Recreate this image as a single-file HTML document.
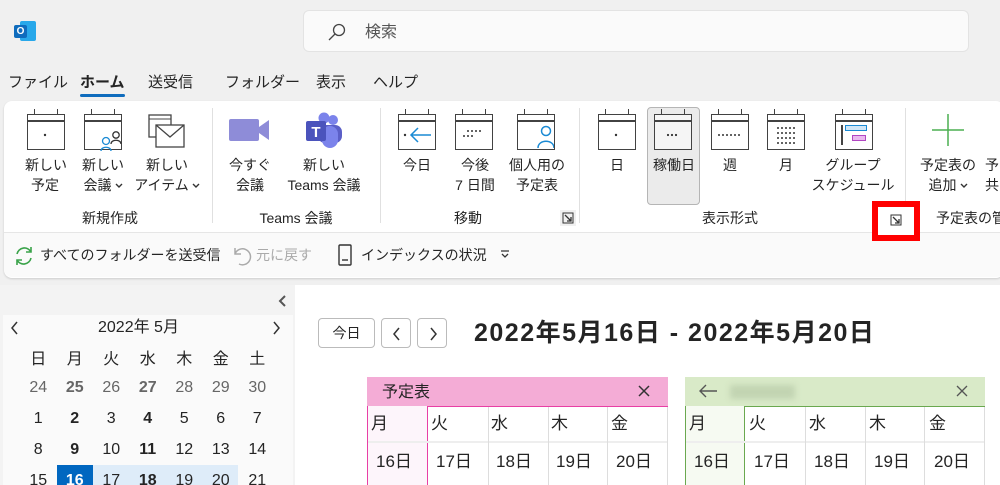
<!DOCTYPE html>
<html><head><meta charset="utf-8"><style>
*{margin:0;padding:0;box-sizing:border-box}
html,body{width:1000px;height:485px;overflow:hidden}
body{background:#f0f0f0;font-family:"Liberation Sans","Noto Sans CJK JP",sans-serif;color:#242424;position:relative}
.a{position:absolute}
.t{position:absolute;font-size:14px;white-space:nowrap;text-align:center;line-height:20px}
.sep{position:absolute;top:108px;width:1px;height:115px;background:#e0e0e0}
.cal{position:absolute;width:38px;height:36px;border:1.6px solid #424242}
.cal:before{content:"";position:absolute;left:0;right:0;top:5px;height:1.5px;background:#424242}
.cal:after{content:"";position:absolute;left:6px;right:6px;top:-6px;height:6px;border-left:1.6px solid #424242;border-right:1.6px solid #424242}
.cal svg{position:absolute;left:0;top:0}
.grid td{width:36.5px;text-align:center;height:31px;font-size:16px}
.tab{position:absolute;top:73px;font-size:15px;white-space:nowrap;line-height:20px}
.chev{display:inline-block;width:8px;height:6px;margin-left:3px;vertical-align:middle}
</style></head><body>
<div class="a" style="left:14px;top:21px;width:22px;height:20px">
<div class="a" style="left:6px;top:0;width:16px;height:20px;background:#28a8ea;border-radius:2px"></div>
<div class="a" style="left:0;top:4px;width:13px;height:13px;background:#0f6cbd;border-radius:2px;color:#fff;font-size:10px;font-weight:bold;text-align:center;line-height:13px">O</div>
</div>
<div class="a" style="left:303px;top:10px;width:666px;height:42px;background:#fafafa;border:1px solid #e3e3e3;border-radius:6px"></div>
<svg class="a" style="left:327px;top:22px" width="20" height="20"><circle cx="12" cy="8" r="5.5" fill="none" stroke="#444" stroke-width="1.3"/><line x1="8" y1="12" x2="2" y2="18" stroke="#444" stroke-width="1.3"/></svg>
<div class="t" style="left:365px;top:23px;font-size:16px;color:#555">検索</div>
<div class="tab" style="left:8px">ファイル</div>
<div class="tab" style="left:80px;font-weight:bold">ホーム</div>
<div class="a" style="left:80px;top:94px;width:45px;height:3px;background:#0f6cbd;border-radius:2px"></div>
<div class="tab" style="left:148px">送受信</div>
<div class="tab" style="left:225px">フォルダー</div>
<div class="tab" style="left:316px">表示</div>
<div class="tab" style="left:373px">ヘルプ</div>
<div class="a" style="left:4px;top:101px;width:1000px;height:177px;background:#fff;border-radius:8px;box-shadow:0 1px 2px rgba(0,0,0,.15)"></div>
<div class="a" style="left:4px;top:232px;width:1000px;height:45px;background:#fafafa;border-top:1px solid #e6e6e6;border-radius:0 0 8px 8px"></div>
<div class="sep" style="left:212px"></div><div class="sep" style="left:380px"></div><div class="sep" style="left:579px"></div><div class="sep" style="left:905px"></div>
<div class="a" style="left:647px;top:107px;width:53px;height:98px;background:#ebebeb;border:1px solid #b5b5b5;border-radius:4px"></div>
<div class="cal" style="left:27px;top:114px"><svg width="36" height="34"><circle cx="17" cy="20" r="1.2" fill="#333"/></svg></div>
<div class="cal" style="left:84px;top:114px"></div>
<svg class="a" style="left:100px;top:130px" width="24" height="22"><circle cx="6" cy="11" r="3.5" fill="#fff" stroke="#1a8ad4" stroke-width="1.3"/><path d="M1 21c0-5 10-5 10 0" fill="none" stroke="#1a8ad4" stroke-width="1.3"/><circle cx="16" cy="5" r="3.2" fill="#fff" stroke="#333" stroke-width="1.3"/><path d="M11 14c0-5 10-5 10 0" fill="#fff" stroke="#333" stroke-width="1.3"/></svg>
<svg class="a" style="left:147px;top:112px" width="40" height="38"><rect x="2" y="3" width="22" height="22" fill="#fff" stroke="#444" stroke-width="1.3"/><line x1="2" y1="7" x2="24" y2="7" stroke="#444"/><rect x="9" y="13" width="28" height="22" fill="#fff" stroke="#444" stroke-width="1.3"/><path d="M9 13l14 12 14-12" fill="none" stroke="#444" stroke-width="1.3"/></svg>
<svg class="a" style="left:229px;top:117px" width="44" height="26"><rect x="0" y="2" width="30" height="22" fill="#8e8cd8" rx="2"/><path d="M30 10l10-7v20l-10-7z" fill="#8e8cd8"/></svg>
<svg class="a" style="left:305px;top:112px" width="40" height="36"><circle cx="28" cy="8" r="5" fill="#7b83eb"/><circle cx="19" cy="6" r="5.5" fill="#7b83eb"/><rect x="13" y="13" width="24" height="18" rx="7" fill="#5b5fc7"/><rect x="17" y="14" width="16" height="22" rx="8" fill="#7b83eb"/><rect x="1" y="9" width="20" height="20" rx="2" fill="#4b53bc"/><text x="11" y="25" font-size="15" font-weight="bold" fill="#fff" text-anchor="middle" font-family="Liberation Sans">T</text></svg>
<div class="cal" style="left:398px;top:114px"><svg width="36" height="34"><circle cx="6" cy="20" r="1.2" fill="#333"/><path d="M12 20h20M19 13l-7 7 7 7" fill="none" stroke="#1a8ad4" stroke-width="1.5"/></svg></div>
<div class="cal" style="left:455px;top:114px"><svg width="36" height="34"><g fill="#333"><circle cx="12" cy="16" r="1"/><circle cx="16" cy="16" r="1"/><circle cx="20" cy="16" r="1"/><circle cx="24" cy="16" r="1"/><circle cx="8" cy="21" r="1"/><circle cx="12" cy="21" r="1"/><circle cx="16" cy="21" r="1"/></g></svg></div>
<div class="cal" style="left:517px;top:114px"><svg width="36" height="34"><circle cx="28" cy="16" r="4.5" fill="#fff" stroke="#1a8ad4" stroke-width="1.5"/><path d="M20 33c0-9 16-9 16 0" fill="#fff" stroke="#1a8ad4" stroke-width="1.5"/></svg></div>
<div class="cal" style="left:598px;top:114px"><svg width="36" height="34"><circle cx="17" cy="20" r="1.2" fill="#333"/></svg></div>
<div class="cal" style="left:654px;top:114px;background:#f5f5f5"><svg width="36" height="34"><g fill="#333"><circle cx="13" cy="20" r="1.1"/><circle cx="17" cy="20" r="1.1"/><circle cx="21" cy="20" r="1.1"/></g></svg></div>
<div class="cal" style="left:711px;top:114px"><svg width="36" height="34"><g fill="#333"><circle cx="7" cy="20" r="1"/><circle cx="11" cy="20" r="1"/><circle cx="15" cy="20" r="1"/><circle cx="19" cy="20" r="1"/><circle cx="23" cy="20" r="1"/><circle cx="27" cy="20" r="1"/></g></svg></div>
<div class="cal" style="left:767px;top:114px"><svg width="36" height="34"><g fill="#333" id="mg"><circle cx="10" cy="13" r="1"/><circle cx="14" cy="13" r="1"/><circle cx="18" cy="13" r="1"/><circle cx="22" cy="13" r="1"/><circle cx="26" cy="13" r="1"/></g><use href="#mg" y="5"/><use href="#mg" y="10"/><use href="#mg" y="15"/></svg></div>
<div class="cal" style="left:835px;top:114px"><div class="a" style="left:5px;top:10px;width:1.5px;height:20px;background:#444"></div><div class="a" style="left:9px;top:10px;width:22px;height:6px;border:1.5px solid #1a8ad4;background:#cfe6f7"></div><div class="a" style="left:16px;top:20px;width:14px;height:6px;border:1.5px solid #b146c2;background:#e9b8ef"></div></div>
<svg class="a" style="left:930px;top:112px" width="36" height="36"><path d="M18 2v32M2 18h32" stroke="#4caf50" stroke-width="1.5"/></svg>
<div class="t" style="left:25px;top:155px;width:40px">新しい<br>予定</div>
<div class="t" style="left:78px;top:155px;width:50px">新しい<br>会議<svg class="chev" viewBox="0 0 8 6"><path d="M1 1l3 3 3-3" fill="none" stroke="#333" stroke-width="1.4"/></svg></div>
<div class="t" style="left:134px;top:155px;width:66px">新しい<br>アイテム<svg class="chev" viewBox="0 0 8 6"><path d="M1 1l3 3 3-3" fill="none" stroke="#333" stroke-width="1.4"/></svg></div>
<div class="t" style="left:225px;top:155px;width:50px">今すぐ<br>会議</div>
<div class="t" style="left:280px;top:155px;width:88px">新しい<br>Teams 会議</div>
<div class="t" style="left:397px;top:155px;width:40px">今日</div>
<div class="t" style="left:453px;top:155px;width:44px">今後<br>7 日間</div>
<div class="t" style="left:502px;top:155px;width:70px">個人用の<br>予定表</div>
<div class="t" style="left:602px;top:155px;width:30px">日</div>
<div class="t" style="left:648px;top:155px;width:52px">稼働日</div>
<div class="t" style="left:715px;top:155px;width:30px">週</div>
<div class="t" style="left:771px;top:155px;width:30px">月</div>
<div class="t" style="left:810px;top:155px;width:86px">グループ<br>スケジュール</div>
<div class="t" style="left:915px;top:155px;width:66px">予定表の<br>追加<svg class="chev" viewBox="0 0 8 6"><path d="M1 1l3 3 3-3" fill="none" stroke="#333" stroke-width="1.4"/></svg></div>
<div class="t" style="left:985px;top:155px">予<br>共</div>
<div class="t" style="left:70px;top:208px;width:80px">新規作成</div>
<div class="t" style="left:246px;top:208px;width:100px">Teams 会議</div>
<div class="t" style="left:448px;top:208px;width:40px">移動</div>
<div class="t" style="left:690px;top:208px;width:80px">表示形式</div>
<div class="t" style="left:936px;top:208px">予定表の管</div>
<div class="a" style="left:560px;top:210px;width:16px;height:16px;background:#f0f0f0"></div>
<svg class="a" style="left:562px;top:212px" width="12" height="12"><path d="M1 1h10v10H1z" fill="none" stroke="#333" stroke-width="1"/><path d="M3 3l6 6M9 5v4H5" fill="none" stroke="#333" stroke-width="1.3"/></svg>
<div class="a" style="left:872px;top:201px;width:48px;height:40px;border:6px solid #f00;background:#fff"></div>
<svg class="a" style="left:890px;top:214px" width="12" height="12"><path d="M1 1h10v10H1z" fill="none" stroke="#333" stroke-width="1"/><path d="M3 3l6 6M9 5v4H5" fill="none" stroke="#333" stroke-width="1.3"/></svg>
<svg class="a" style="left:13px;top:245px" width="22" height="22"><path d="M4 9a7.5 7.5 0 0 1 14-2M18 13a7.5 7.5 0 0 1-14 2" fill="none" stroke="#3aa34a" stroke-width="1.6"/><path d="M18 2v5h-5M4 20v-5h5" fill="none" stroke="#3aa34a" stroke-width="1.6"/></svg>
<div class="t" style="left:40px;top:245px">すべてのフォルダーを送受信</div>
<svg class="a" style="left:230px;top:245px" width="22" height="22"><path d="M5 3v6h6M5 9a8 8 0 1 1 4 10" fill="none" stroke="#aaa" stroke-width="1.5"/></svg>
<div class="t" style="left:256px;top:245px;color:#aaa">元に戻す</div>
<svg class="a" style="left:337px;top:243px" width="16" height="24"><rect x="2" y="2" width="12" height="20" rx="1" fill="none" stroke="#333" stroke-width="1.4"/><line x1="5" y1="17" x2="11" y2="17" stroke="#333" stroke-width="1.4"/></svg>
<div class="t" style="left:361px;top:245px">インデックスの状況</div>
<svg class="a" style="left:500px;top:249px" width="10" height="10"><path d="M1 2h8M2 5l3 3 3-3" fill="none" stroke="#333" stroke-width="1.3"/></svg>
<div class="a" style="left:0;top:285px;width:295px;height:200px;background:#f3f3f3"></div>
<svg class="a" style="left:278px;top:295px" width="10" height="12"><path d="M7 1l-5 5 5 5" fill="none" stroke="#555" stroke-width="2"/></svg>
<div class="a" style="left:3px;top:315px;width:290px;height:170px;background:#fafafa"></div>
<svg class="a" style="left:10px;top:321px" width="10" height="14"><path d="M7 1l-5 6 5 6" fill="none" stroke="#333" stroke-width="1.5"/></svg>
<svg class="a" style="left:271px;top:321px" width="10" height="14"><path d="M3 1l5 6-5 6" fill="none" stroke="#333" stroke-width="1.5"/></svg>
<div class="t" style="left:98px;top:318px;font-size:16px">2022年 5月</div>
<div class="a" style="left:57px;top:465px;width:36px;height:20px;background:#0067c0"></div>
<div class="a" style="left:93px;top:465px;width:145px;height:20px;background:#deecf9"></div>
<table class="grid a" style="left:20px;top:341px;border-collapse:collapse">
<tr><td>日</td><td>月</td><td>火</td><td>水</td><td>木</td><td>金</td><td>土</td></tr>
<tr style="color:#666"><td>24</td><td style="font-weight:bold">25</td><td>26</td><td style="font-weight:bold">27</td><td>28</td><td>29</td><td>30</td></tr>
<tr><td>1</td><td style="font-weight:bold">2</td><td>3</td><td style="font-weight:bold">4</td><td>5</td><td>6</td><td>7</td></tr>
<tr><td>8</td><td style="font-weight:bold">9</td><td>10</td><td style="font-weight:bold">11</td><td>12</td><td>13</td><td>14</td></tr>
<tr><td>15</td><td style="font-weight:bold;color:#fff">16</td><td>17</td><td style="font-weight:bold">18</td><td>19</td><td>20</td><td>21</td></tr>
</table>
<div class="a" style="left:295px;top:285px;width:705px;height:200px;background:#fff"></div>
<div class="a" style="left:318px;top:318px;width:57px;height:30px;border:1px solid #bbb;border-radius:4px;font-size:14px;text-align:center;line-height:28px">今日</div>
<div class="a" style="left:381px;top:318px;width:30px;height:30px;border:1px solid #bbb;border-radius:4px"><svg class="a" style="left:10px;top:8px" width="10" height="14"><path d="M7 1l-5 6 5 6" fill="none" stroke="#333" stroke-width="1.5"/></svg></div>
<div class="a" style="left:417px;top:318px;width:30px;height:30px;border:1px solid #bbb;border-radius:4px"><svg class="a" style="left:10px;top:8px" width="10" height="14"><path d="M3 1l5 6-5 6" fill="none" stroke="#333" stroke-width="1.5"/></svg></div>
<div class="t" style="left:474px;top:317px;font-size:25px;letter-spacing:1.5px;font-weight:bold;line-height:32px">2022年5月16日 - 2022年5月20日</div>
<div class="a" style="left:367px;top:377px;width:301px;height:30px;background:#f4acd6"></div>
<div class="t" style="left:382px;top:383px;font-size:16px">予定表</div>
<svg class="a" style="left:638px;top:385px" width="12" height="12"><path d="M1 1l10 10M11 1L1 11" stroke="#333" stroke-width="1.5"/></svg>
<div class="a" style="left:367px;top:406px;width:301px;height:79px;border-top:1.5px solid #e83fa5"></div>
<div class="a" style="left:367px;top:406px;width:61px;height:79px;background:#fdf5fb;border-left:1.5px solid #e83fa5;border-right:1.5px solid #e83fa5"></div>
<div class="a" style="left:368px;top:441px;width:300px;height:2px;background:#eee"></div>
<div class="a" style="left:685px;top:377px;width:300px;height:30px;background:#d9eac8"></div>
<svg class="a" style="left:698px;top:384px" width="20" height="14"><path d="M2 7h17M8 1L2 7l6 6" fill="none" stroke="#555" stroke-width="1.4"/></svg>
<div class="a" style="left:730px;top:385px;width:65px;height:14px;background:#c2d4b2;filter:blur(3px)"></div>
<svg class="a" style="left:956px;top:385px" width="12" height="12"><path d="M1 1l10 10M11 1L1 11" stroke="#555" stroke-width="1.3"/></svg>
<div class="a" style="left:685px;top:406px;width:300px;height:79px;border-top:1.5px solid #6aa84f"></div>
<div class="a" style="left:685px;top:406px;width:60px;height:79px;background:#f6faf2;border-left:1.5px solid #6aa84f;border-right:1.5px solid #6aa84f"></div>
<div class="a" style="left:686px;top:441px;width:299px;height:2px;background:#eee"></div>
<div class="a" style="left:488px;top:407px;width:1px;height:78px;background:#ddd"></div>
<div class="a" style="left:548px;top:407px;width:1px;height:78px;background:#ddd"></div>
<div class="a" style="left:607px;top:407px;width:1px;height:78px;background:#ddd"></div>
<div class="a" style="left:667px;top:407px;width:1px;height:78px;background:#ddd"></div>
<div class="a" style="left:805px;top:407px;width:1px;height:78px;background:#ddd"></div>
<div class="a" style="left:865px;top:407px;width:1px;height:78px;background:#ddd"></div>
<div class="a" style="left:924px;top:407px;width:1px;height:78px;background:#ddd"></div>
<div class="a" style="left:984px;top:407px;width:1px;height:78px;background:#ddd"></div>
<div class="t" style="left:371px;top:414px;font-size:17px">月</div>
<div class="t" style="left:431px;top:414px;font-size:17px">火</div>
<div class="t" style="left:491px;top:414px;font-size:17px">水</div>
<div class="t" style="left:551px;top:414px;font-size:17px">木</div>
<div class="t" style="left:611px;top:414px;font-size:17px">金</div>
<div class="t" style="left:376px;top:452px;font-size:17px">16日</div>
<div class="t" style="left:436px;top:452px;font-size:17px">17日</div>
<div class="t" style="left:496px;top:452px;font-size:17px">18日</div>
<div class="t" style="left:556px;top:452px;font-size:17px">19日</div>
<div class="t" style="left:616px;top:452px;font-size:17px">20日</div>
<div class="t" style="left:689px;top:414px;font-size:17px">月</div>
<div class="t" style="left:749px;top:414px;font-size:17px">火</div>
<div class="t" style="left:809px;top:414px;font-size:17px">水</div>
<div class="t" style="left:869px;top:414px;font-size:17px">木</div>
<div class="t" style="left:929px;top:414px;font-size:17px">金</div>
<div class="t" style="left:694px;top:452px;font-size:17px">16日</div>
<div class="t" style="left:754px;top:452px;font-size:17px">17日</div>
<div class="t" style="left:814px;top:452px;font-size:17px">18日</div>
<div class="t" style="left:874px;top:452px;font-size:17px">19日</div>
<div class="t" style="left:934px;top:452px;font-size:17px">20日</div>
</body></html>
